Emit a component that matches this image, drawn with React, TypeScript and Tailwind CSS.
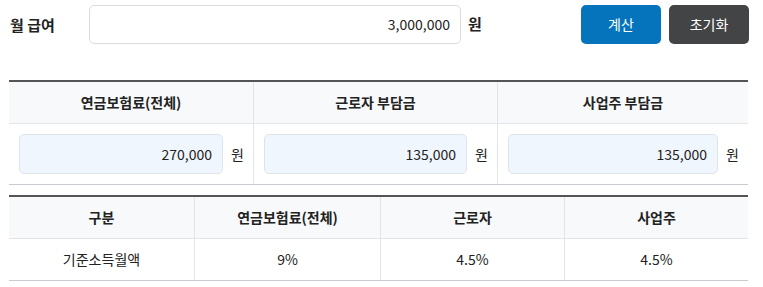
import React from "react";

const font = { fontFamily: '"Noto Sans CJK KR", "Noto Sans", sans-serif' };

function ResultCell({ value, last }: { value: string; last?: boolean }) {
  return (
    <div className={`flex items-center gap-[8px] px-[10px] h-[60px] ${last ? "" : "border-r border-[#e2e4e8]"}`}>
      <div className="flex-1 h-[40px] rounded-[5px] border border-[#dfe4ea] bg-[#f0f6fe] flex items-center justify-end pr-[10px] text-[14px] text-[#222]">
        {value}
      </div>
      <span className="text-[14px] text-[#222] w-[12px]">원</span>
    </div>
  );
}

export default function App() {
  return (
    <div className="w-[763px] h-[287px] bg-white pl-[9px] pr-[14px] text-[#222]" style={font}>
      <div className="flex items-center pt-[5px] h-[44px]">
        <div className="w-[80px] pl-[1px] text-[15px] font-bold leading-none">월 급여</div>
        <div className="w-[372px] h-[39px] rounded-[5px] border border-[#dcdcdc] flex items-center justify-end pr-[10px] text-[14px]">
          3,000,000
        </div>
        <span className="ml-[7px] text-[15px] font-bold">원</span>
        <div className="ml-auto flex gap-[8px]">
          <button className="w-[80px] h-[39px] rounded-[5px] bg-[#0574bc] text-white text-[14px]">계산</button>
          <button className="w-[80px] h-[39px] rounded-[5px] bg-[#434446] text-white text-[14px]">초기화</button>
        </div>
      </div>

      <div className="mt-[36px] w-[739px] border-t-2 border-[#555] border-b border-b-[#c9cbd1]">
        <div className="grid grid-cols-[245px_244px_1fr] bg-[#f8f9fb] border-b border-[#e2e4e8]">
          <div className="h-[41px] flex items-center justify-center text-[14px] font-bold border-r border-[#e2e4e8]">연금보험료(전체)</div>
          <div className="h-[41px] flex items-center justify-center text-[14px] font-bold border-r border-[#e2e4e8]">근로자 부담금</div>
          <div className="h-[41px] flex items-center justify-center text-[14px] font-bold">사업주 부담금</div>
        </div>
        <div className="grid grid-cols-[245px_244px_1fr]">
          <ResultCell value="270,000" />
          <ResultCell value="135,000" />
          <ResultCell value="135,000" last />
        </div>
      </div>

      <div className="mt-[10px] w-[739px] border-t-2 border-[#555] border-b border-b-[#c9cbd1]">
        <div className="grid grid-cols-[186px_186px_184px_1fr] bg-[#f8f9fb] border-b border-[#e2e4e8]">
          <div className="h-[41px] flex items-center justify-center text-[14px] font-bold border-r border-[#e2e4e8]">구분</div>
          <div className="h-[41px] flex items-center justify-center text-[14px] font-bold border-r border-[#e2e4e8]">연금보험료(전체)</div>
          <div className="h-[41px] flex items-center justify-center text-[14px] font-bold border-r border-[#e2e4e8]">근로자</div>
          <div className="h-[41px] flex items-center justify-center text-[14px] font-bold">사업주</div>
        </div>
        <div className="grid grid-cols-[186px_186px_184px_1fr]">
          <div className="h-[41px] flex items-center justify-center text-[14px] border-r border-[#e2e4e8]">기준소득월액</div>
          <div className="h-[41px] flex items-center justify-center text-[14px] border-r border-[#e2e4e8]">9%</div>
          <div className="h-[41px] flex items-center justify-center text-[14px] border-r border-[#e2e4e8]">4.5%</div>
          <div className="h-[41px] flex items-center justify-center text-[14px]">4.5%</div>
        </div>
      </div>
    </div>
  );
}
